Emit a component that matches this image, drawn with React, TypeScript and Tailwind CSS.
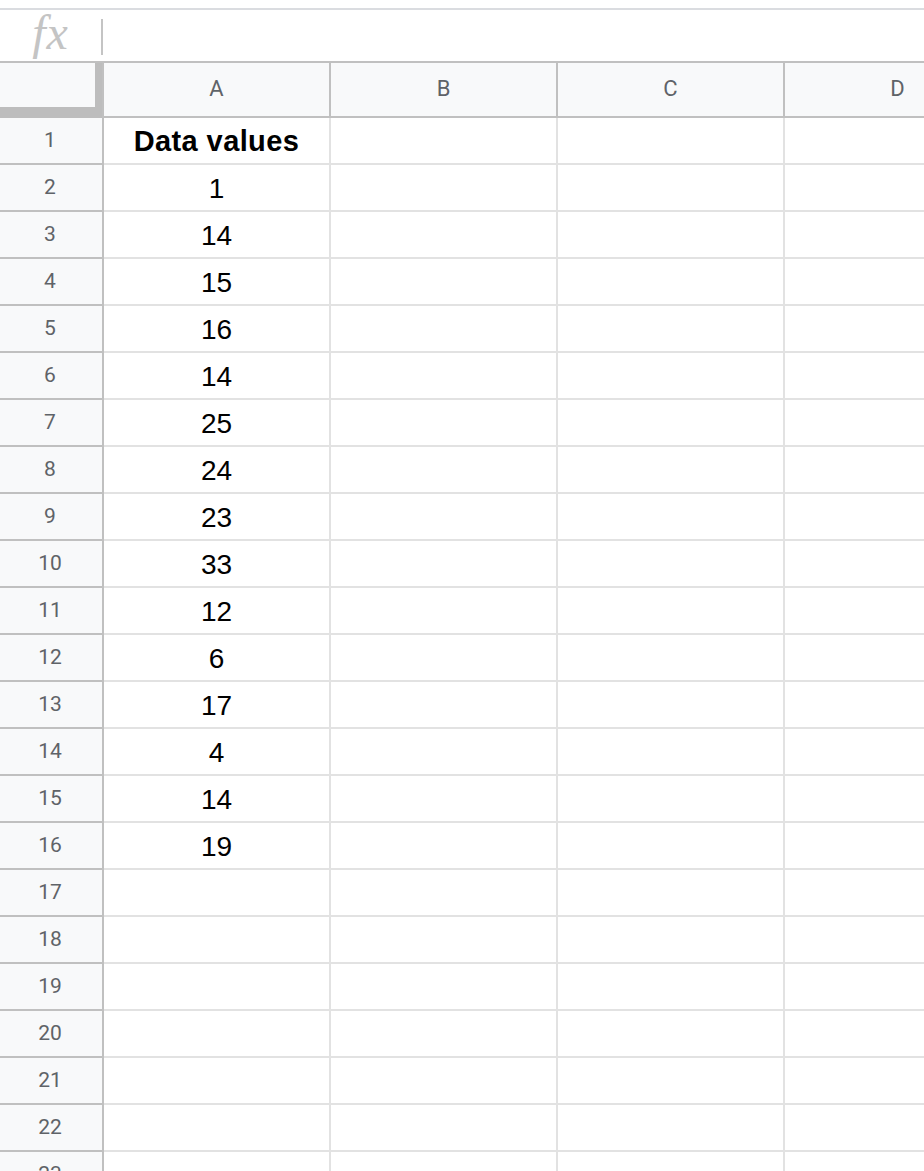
const values: (string | number)[] = [
  "Data values", 1, 14, 15, 16, 14, 25, 24, 23, 33, 12, 6, 17, 4, 14, 19,
];
const cols = ["A", "B", "C", "D"];
const rowCount = 23;

export default function App() {
  return (
    <div className="w-[924px] h-[1171px] overflow-hidden bg-white font-['Liberation_Sans',Arial,sans-serif]">
      {/* formula bar */}
      <div className="h-[10px] border-b-2 border-[#dadce0]" />
      <div className="h-[53px] border-b-2 border-[#c0c0c0] flex items-center">
        <div className="w-[101px] flex justify-center pl-[2px]">
          <span className="font-['Liberation_Serif',serif] italic text-[48px] leading-none text-[#c4c4c4] -mt-[6px] -ml-[2px] tracking-[1px]">
            fx
          </span>
        </div>
        <div className="w-[2px] h-[36px] bg-[#c4c4c4] mt-[2px]" />
      </div>

      {/* column headers */}
      <div className="flex h-[55px]">
        <div className="w-[102px] shrink-0 bg-[#bdbdbd]">
          <div className="w-[95px] h-[44px] bg-[#f8f9fa]" />
        </div>
        <div className="w-[2px] shrink-0 bg-[#c0c0c0]" />
        {cols.map((c) => (
          <div
            key={c}
            className="w-[227px] shrink-0 bg-[#f8f9fa] border-r-2 border-b-2 border-[#c0c0c0] flex items-center justify-center text-[22px] text-[#5f6368] font-['Roboto',sans-serif] pb-[2px]"
          >
            {c}
          </div>
        ))}
      </div>

      {/* rows */}
      {Array.from({ length: rowCount }, (_, i) => (
        <div key={i} className="flex h-[47px]">
          <div className="w-[104px] shrink-0 bg-[#f8f9fa] border-r-2 border-b-2 border-[#c0c0c0] flex items-center justify-center text-[21px] text-[#5f6368] font-['Roboto',sans-serif] pr-[2px]">
            {i + 1}
          </div>
          {cols.map((c, j) => (
            <div
              key={c}
              className={`w-[227px] shrink-0 border-r-2 border-b-2 border-[#e2e2e2] flex items-center justify-center text-black pt-[2px] ${
                i === 0 ? "font-bold text-[29px] tracking-[0.4px]" : "text-[28px]"
              }`}
            >
              {j === 0 && values[i] !== undefined ? values[i] : ""}
            </div>
          ))}
        </div>
      ))}
    </div>
  );
}
